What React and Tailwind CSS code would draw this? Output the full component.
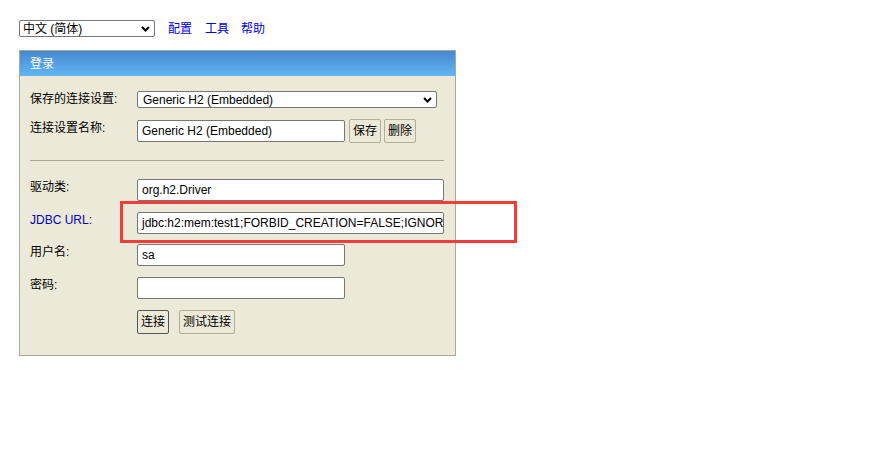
import React from 'react';

const font = "font-['Liberation_Sans','Noto_Sans_CJK_SC',sans-serif]";

function Field({ label, labelClass = 'text-black', children, className = '' }) {
  return (
    <div className={`flex items-start ${className}`}>
      <div className={`w-[107px] shrink-0 pt-[1px] leading-[14px] ${labelClass}`}>{label}</div>
      {children}
    </div>
  );
}

function TextBox({ value, width = 'w-[208px]' }) {
  return (
    <div className={`${width} h-[22px] bg-white border border-[#767676] rounded-[2px] px-[4px] flex items-center overflow-hidden whitespace-nowrap text-[12px] text-black`}>
      {value}
    </div>
  );
}

function Btn({ children, dark = false }) {
  return (
    <button
      className={`h-[24px] px-[3px] bg-[#ece9d8] rounded-[2px] border text-[12px] leading-none text-black ${
        dark ? 'border-[#555555]' : 'border-[#b0ad9f]'
      }`}
    >
      {children}
    </button>
  );
}

export default function App() {
  return (
    <div className={`min-h-[451px] w-[892px] bg-white pl-[19px] pt-[20px] text-[12px] ${font}`}>
      {/* top bar */}
      <div className="flex items-center h-[17px]">
        <div className="w-[136px] h-[17px] border border-[#767676] rounded-[2px] flex items-center justify-between pl-[3px] pr-[4px] bg-white">
          <span className="leading-none">中文 (简体)</span>
          <svg width="9" height="6" viewBox="0 0 9 6">
            <path d="M1 1l3.5 3.5L8 1" fill="none" stroke="#000" strokeWidth="2" />
          </svg>
        </div>
        <a className="ml-[13px] text-[#0000ee]">配置</a>
        <a className="ml-[13px] text-[#0000ee]">工具</a>
        <a className="ml-[12px] text-[#0000ee]">帮助</a>
      </div>

      {/* login panel */}
      <div className="mt-[13px] w-[437px] border border-[#aca899] bg-[#ece9d8]">
        <div className="h-[25px] bg-gradient-to-b from-[#4688d0] to-[#62b6f4] text-white flex items-center pl-[10px]">
          登录
        </div>

        <div className="pl-[10px] pr-[11px] pt-[16px] pb-[21px]">
          <Field label="保存的连接设置:" className="-mt-[1px]">
            <div className="w-[300px] h-[17px] bg-white border border-[#767676] rounded-[2px] flex items-center justify-between pl-[5px] pr-[4px]">
              <span className="leading-none">Generic H2 (Embedded)</span>
              <svg width="9" height="6" viewBox="0 0 9 6">
                <path d="M1 1l3.5 3.5L8 1" fill="none" stroke="#000" strokeWidth="2" />
              </svg>
            </div>
          </Field>

          <Field label="连接设置名称:" className="mt-[12px]">
            <TextBox value="Generic H2 (Embedded)" />
            <div className="flex gap-[3px] ml-[4px] -mt-[1px]">
              <Btn>保存</Btn>
              <Btn>删除</Btn>
            </div>
          </Field>

          <div className="mt-[17px] h-px bg-[#a8a699]" />

          <Field label="驱动类:" className="mt-[18px]">
            <TextBox value="org.h2.Driver" width="w-[307px]" />
          </Field>

          <div className="relative mt-[11px]">
            <Field label="JDBC URL:" labelClass="text-[#0000cc]">
              <TextBox value="jdbc:h2:mem:test1;FORBID_CREATION=FALSE;IGNORE_UNKNOWN_SETTINGS=TRUE" width="w-[307px]" />
            </Field>
            <div className="absolute left-[90px] top-[-11px] w-[397px] h-[42px] border-[3px] border-[#f23b3b] pointer-events-none" />
          </div>

          <Field label="用户名:" className="mt-[10px]">
            <TextBox value="sa" />
          </Field>

          <Field label="密码:" className="mt-[11px]">
            <TextBox value="" />
          </Field>

          <div className="flex gap-[10px] mt-[11px] ml-[107px]">
            <Btn dark>连接</Btn>
            <Btn>测试连接</Btn>
          </div>
        </div>
      </div>
    </div>
  );
}
